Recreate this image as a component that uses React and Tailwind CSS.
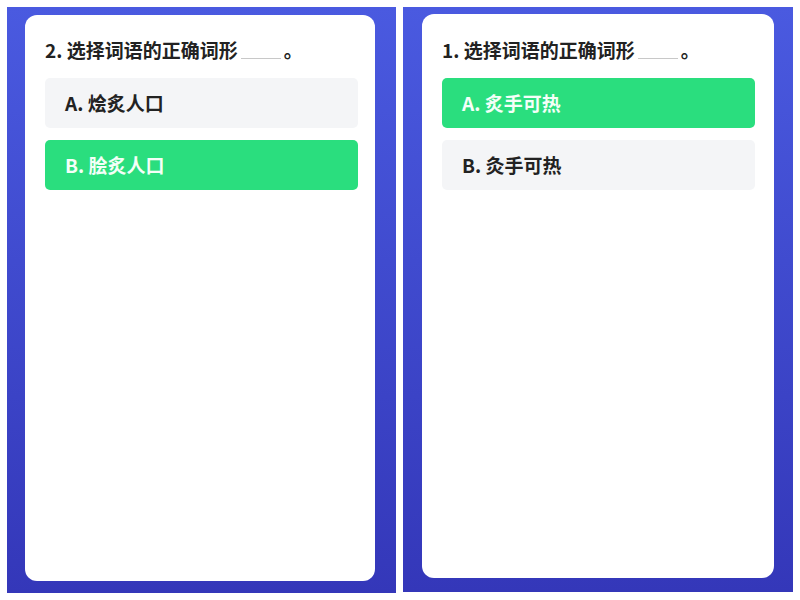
import React from "react";

const FONT = { fontFamily: '"Noto Sans CJK SC", "Noto Sans", sans-serif' };

function Card({ num, options, picked, cardClass }) {
  return (
    <div className={`bg-white rounded-[12px] flex flex-col ${cardClass}`}>
      <div className="flex items-end text-[19px] font-bold leading-6 text-[#222]">
        <span>{num}. 选择词语的正确词形</span>
        <span className="inline-block w-[40px] h-[1px] bg-[#c8c8c8] mx-[3px] mb-[3px]" />
        <span>。</span>
      </div>
      <div className="flex flex-col gap-[12px] mt-[16px]">
        {options.map((o, i) => (
          <div
            key={o.label}
            className={`h-[50px] rounded-[5px] flex items-center pl-[20px] text-[19px] font-bold ${
              i === picked ? "bg-[#2ade7e] text-[#f4fff8]" : "bg-[#f4f5f7] text-[#222]"
            }`}
          >
            {o.label}. {o.text}
          </div>
        ))}
      </div>
    </div>
  );
}

export default function App() {
  return (
    <div className="w-[800px] h-[600px] bg-white flex" style={FONT}>
      <div className="ml-[7px] mt-[7px] w-[389px] h-[586px] bg-gradient-to-b from-[#4a5ae0] to-[#3437b9] pl-[18px] pr-[21px] pt-[8px] pb-[12px] flex">
        <Card
          num={2}
          picked={1}
          cardClass="flex-1 pl-[20px] pr-[17px] pt-[23px]"
          options={[
            { label: "A", text: "烩炙人口" },
            { label: "B", text: "脍炙人口" },
          ]}
        />
      </div>
      <div className="ml-[7px] mt-[7px] w-[390px] h-[585px] bg-gradient-to-b from-[#4a5ae0] to-[#3437b9] pl-[19px] pr-[19px] pt-[7px] pb-[14px] flex">
        <Card
          num={1}
          picked={0}
          cardClass="flex-1 pl-[20px] pr-[19px] pt-[24px]"
          options={[
            { label: "A", text: "炙手可热" },
            { label: "B", text: "灸手可热" },
          ]}
        />
      </div>
    </div>
  );
}
